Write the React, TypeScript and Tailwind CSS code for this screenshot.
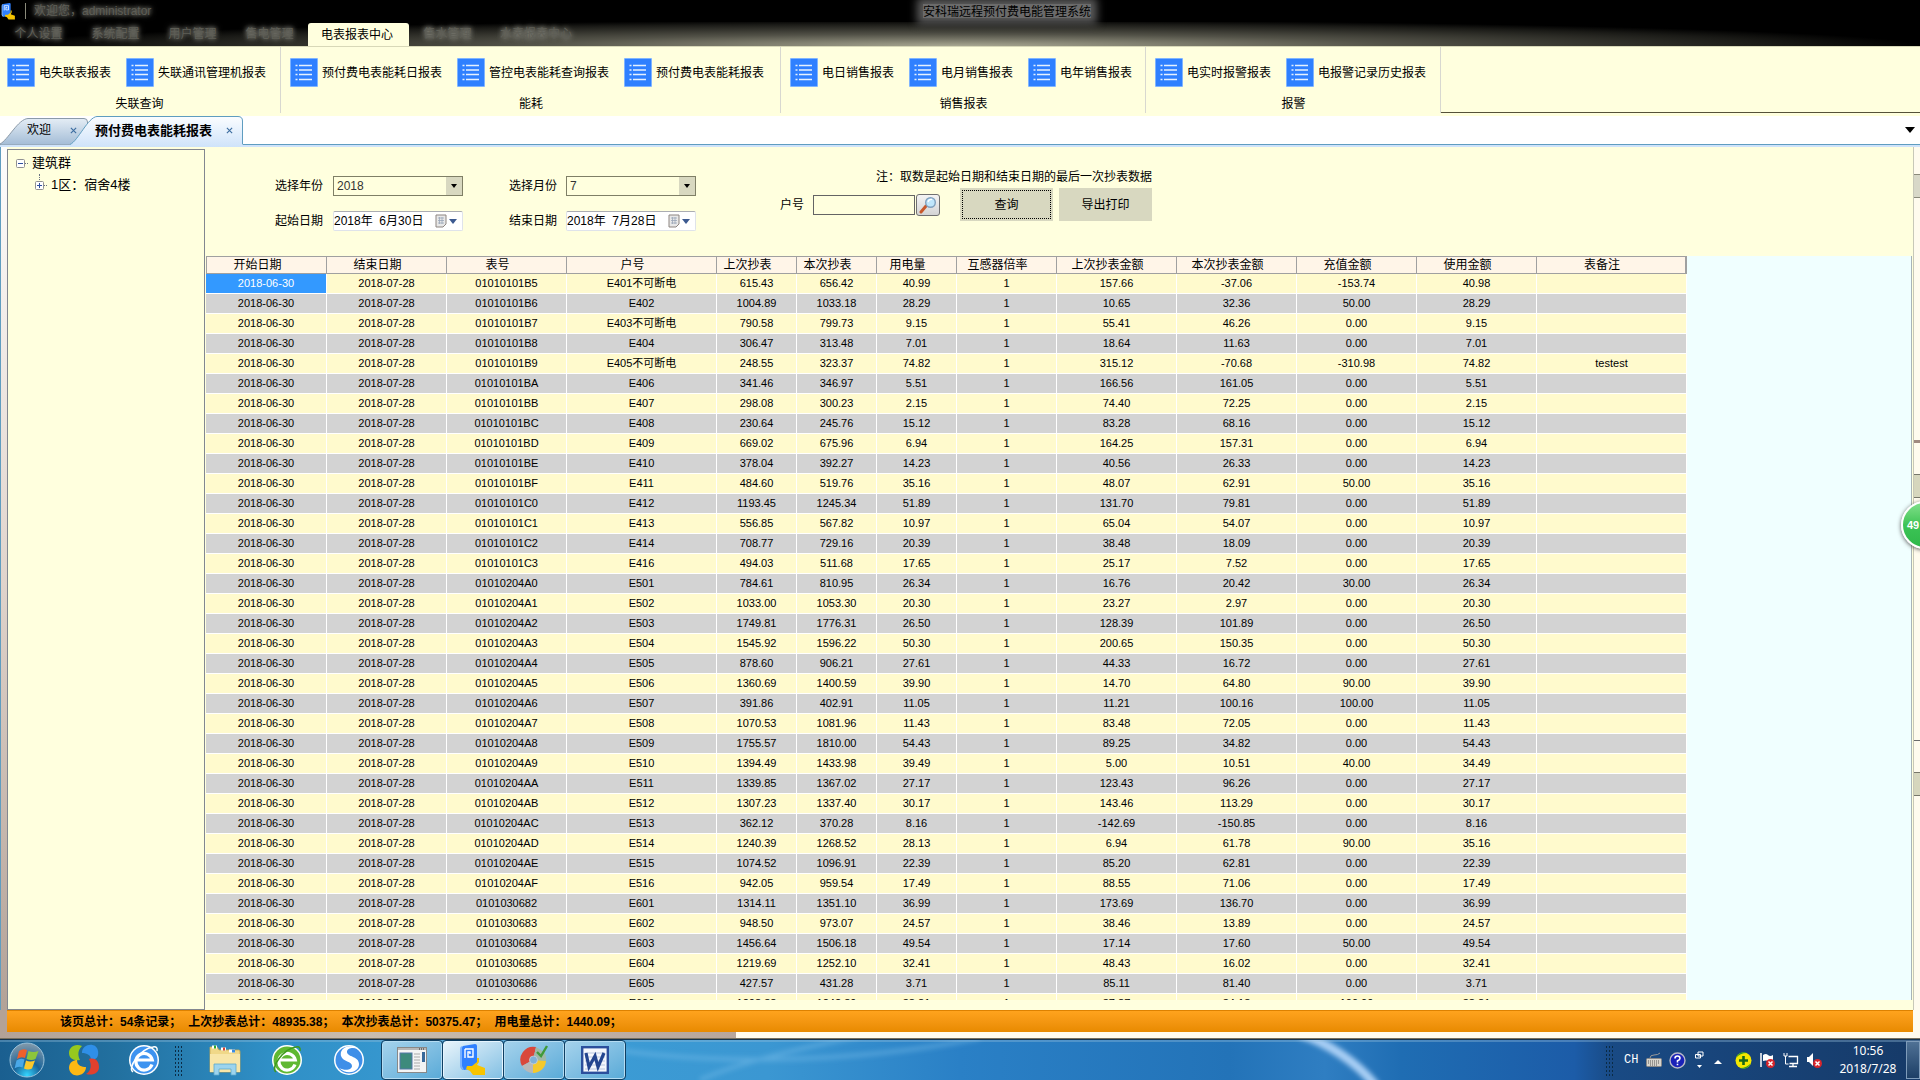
import React from "react";

const CJK = "font-['Liberation_Sans','Noto_Sans_CJK_SC',sans-serif]";

const RAW = `01010101B5|E401不可断电|615.43|656.42|40.99|157.66|-37.06|-153.74|40.98
01010101B6|E402|1004.89|1033.18|28.29|10.65|32.36|50.00|28.29
01010101B7|E403不可断电|790.58|799.73|9.15|55.41|46.26|0.00|9.15
01010101B8|E404|306.47|313.48|7.01|18.64|11.63|0.00|7.01
01010101B9|E405不可断电|248.55|323.37|74.82|315.12|-70.68|-310.98|74.82|testest
01010101BA|E406|341.46|346.97|5.51|166.56|161.05|0.00|5.51
01010101BB|E407|298.08|300.23|2.15|74.40|72.25|0.00|2.15
01010101BC|E408|230.64|245.76|15.12|83.28|68.16|0.00|15.12
01010101BD|E409|669.02|675.96|6.94|164.25|157.31|0.00|6.94
01010101BE|E410|378.04|392.27|14.23|40.56|26.33|0.00|14.23
01010101BF|E411|484.60|519.76|35.16|48.07|62.91|50.00|35.16
01010101C0|E412|1193.45|1245.34|51.89|131.70|79.81|0.00|51.89
01010101C1|E413|556.85|567.82|10.97|65.04|54.07|0.00|10.97
01010101C2|E414|708.77|729.16|20.39|38.48|18.09|0.00|20.39
01010101C3|E416|494.03|511.68|17.65|25.17|7.52|0.00|17.65
01010204A0|E501|784.61|810.95|26.34|16.76|20.42|30.00|26.34
01010204A1|E502|1033.00|1053.30|20.30|23.27|2.97|0.00|20.30
01010204A2|E503|1749.81|1776.31|26.50|128.39|101.89|0.00|26.50
01010204A3|E504|1545.92|1596.22|50.30|200.65|150.35|0.00|50.30
01010204A4|E505|878.60|906.21|27.61|44.33|16.72|0.00|27.61
01010204A5|E506|1360.69|1400.59|39.90|14.70|64.80|90.00|39.90
01010204A6|E507|391.86|402.91|11.05|11.21|100.16|100.00|11.05
01010204A7|E508|1070.53|1081.96|11.43|83.48|72.05|0.00|11.43
01010204A8|E509|1755.57|1810.00|54.43|89.25|34.82|0.00|54.43
01010204A9|E510|1394.49|1433.98|39.49|5.00|10.51|40.00|34.49
01010204AA|E511|1339.85|1367.02|27.17|123.43|96.26|0.00|27.17
01010204AB|E512|1307.23|1337.40|30.17|143.46|113.29|0.00|30.17
01010204AC|E513|362.12|370.28|8.16|-142.69|-150.85|0.00|8.16
01010204AD|E514|1240.39|1268.52|28.13|6.94|61.78|90.00|35.16
01010204AE|E515|1074.52|1096.91|22.39|85.20|62.81|0.00|22.39
01010204AF|E516|942.05|959.54|17.49|88.55|71.06|0.00|17.49
0101030682|E601|1314.11|1351.10|36.99|173.69|136.70|0.00|36.99
0101030683|E602|948.50|973.07|24.57|38.46|13.89|0.00|24.57
0101030684|E603|1456.64|1506.18|49.54|17.14|17.60|50.00|49.54
0101030685|E604|1219.69|1252.10|32.41|48.43|16.02|0.00|32.41
0101030686|E605|427.57|431.28|3.71|85.11|81.40|0.00|3.71
0101030687|E606|1208.88|1242.89|38.81|37.87|34.18|100.00|38.81`;

const ROWS = RAW.split("\n").map((line) => {
  const [meter, account, last, current, used, lastSum, currentSum, paid, spent, note = ""] = line.split("|");
  return ["2018-06-30", "2018-07-28", meter, account, last, current, used, "1", lastSum, currentSum, paid, spent, note];
});

const COLUMNS: [string, number][] = [
  ["开始日期", 121],
  ["结束日期", 120],
  ["表号", 120],
  ["户号", 150],
  ["上次抄表", 80],
  ["本次抄表", 80],
  ["用电量", 80],
  ["互感器倍率", 100],
  ["上次抄表金额", 120],
  ["本次抄表金额", 120],
  ["充值金额", 120],
  ["使用金额", 120],
  ["表备注", 150],
];

const GROUPS = [
  { name: "失联查询", width: "w-[281px] pl-[7px]", items: ["电失联表报表", "失联通讯管理机报表"] },
  { name: "能耗", width: "w-[500px] pl-[9px]", items: ["预付费电表能耗日报表", "管控电表能耗查询报表", "预付费电表能耗报表"] },
  { name: "销售报表", width: "w-[365px] pl-[9px]", items: ["电日销售报表", "电月销售报表", "电年销售报表"] },
  { name: "报警", width: "w-[295px] pl-[9px]", items: ["电实时报警报表", "电报警记录历史报表"] },
];

function AppLogo({ className }: { className: string }) {
  return (
    <svg viewBox="0 0 28 32" className={className} aria-hidden="true">
      <path d="M4 2 16 0q2 0 2 2v22L5 26q-3 0-3-3V4z" fill="#2f80ff" />
      <path d="M4 2Q1 2 1 5v17q0 3 4 4L3 22V4z" fill="#79b2ff" />
      <path d="M6 5v9M6 5h8v8H9V8h2v2" stroke="#fff" strokeWidth="1.400" fill="none" />
      <path d="M18 14h2v4l-2 3 8 3v7H14l-3-4-4-2 1-3h5l5-4z" fill="#f7c400" />
    </svg>
  );
}

function ListIcon() {
  return (
    <svg viewBox="0 0 28 29" className="h-[29px] w-7 shrink-0" aria-hidden="true">
      <rect width="28" height="29" rx="1" fill="#7fb4ff" />
      <rect x="1" y="1" width="26" height="27" fill="#2f80ff" />
      <path d="M9 7.500h13M9 12h13M9 16.500h13M9 21.500h13" stroke="#e6f1ff" strokeWidth="1.700" />
      <path d="M5.500 7.500h2M5.500 12h2M5.500 16.500h2M5.500 21.500h2" stroke="#e6f1ff" strokeWidth="1.700" />
    </svg>
  );
}

function TopBar() {
  const left = ["个人设置", "系统配置", "用户管理", "售电管理"];
  const faint = "text-[#5e5e56] [text-shadow:0_0_6px_#9a9a90,0_0_4px_#77776e]";
  return (
    <header className="shrink-0 bg-black">
      <div className="relative flex h-[22px] items-center">
        <AppLogo className="h-[17px] w-[17px]" />
        <span className="ml-2 h-4 w-px bg-[#8a8a7a]" />
        <span className={`ml-2 text-xs ${faint}`}>欢迎您，administrator</span>
        <h1 className="absolute left-1/2 w-[168px] -translate-x-[37px] bg-[#6b6b6b] text-xs leading-4 text-black shadow-[0_0_8px_6px_#5a5a5a]">
          <span className="block h-[14px] whitespace-nowrap">安科瑞远程预付费电能管理系统</span>
        </h1>
      </div>
      <nav className="flex h-6 items-end bg-[radial-gradient(ellipse_960px_26px_at_50%_100%,#a8a792_0%,#8a897899_45%,#33332c80_85%,transparent_100%)] text-xs">
        {left.map((t) => (
          <button key={t} type="button" className={`h-6 w-[77px] ${faint}`}>{t}</button>
        ))}
        <button type="button" className="h-[23px] w-[101px] rounded-t-[3px] bg-[#ffffde] pr-[3px] text-black">电表报表中心</button>
        <button type="button" className={`h-6 w-[77px] ${faint}`}>售水管理</button>
        <button type="button" className={`h-6 w-[100px] ${faint}`}>水表报表中心</button>
      </nav>
    </header>
  );
}

function Ribbon() {
  return (
    <div className="flex h-[70px] shrink-0 border-t border-[#d8d8b8] bg-[#ffffde] text-xs text-black">
      {GROUPS.map((g) => (
        <section key={g.name} className={`flex h-[66px] shrink-0 flex-col border-r border-[#d8d8d0] ${g.width}`}>
          <div className="flex gap-[15px] pt-[11px]">
            {g.items.map((t) => (
              <button key={t} type="button" className="flex items-center gap-1 whitespace-nowrap leading-4">
                <ListIcon />
                {t}
              </button>
            ))}
          </div>
          <div className="mt-[9px] pr-2 text-center leading-4">{g.name}</div>
        </section>
      ))}
      <div className="h-[66px] grow border-b border-[#55513a]" />
    </div>
  );
}

function TabStrip() {
  return (
    <div className="flex h-[31px] shrink-0 items-stretch border-b-2 border-[#cfe3fa] bg-white text-xs text-black">
      <div className="relative flex w-[72px] items-center border-b border-[#5f9dc0] pl-[27px]">
        <svg viewBox="0 0 90 27" className="absolute left-0 top-0.5 h-[27px] w-[90px]" aria-hidden="true">
          <defs>
            <linearGradient id="idleTab" x1="0" y1="0" x2="0" y2="1">
              <stop offset="0" stopColor="#e4edf5" />
              <stop offset="1" stopColor="#a3bcd6" />
            </linearGradient>
          </defs>
          <path d="M0 26C8 22 18 1 28 .5H84Q87.500 .5 87.500 4V27H0z" fill="url(#idleTab)" stroke="#8b9aa8" />
        </svg>
        <button type="button" className="relative">欢迎</button>
        <button type="button" aria-label="关闭欢迎" className="absolute left-[70px] z-10 text-[#3d6da0]">
          <svg viewBox="0 0 8 8" className="size-[7px] stroke-current"><path d="M1 1l6 6M7 1 1 7" strokeWidth="1.300" /></svg>
        </button>
      </div>
      <div className="relative flex w-[171px] items-center justify-between pl-[23px] pr-[10px]">
        <svg viewBox="0 0 174 31" className="absolute -left-[2px] top-0 h-[31px] w-[174px]" aria-hidden="true">
          <defs>
            <linearGradient id="openTab" x1="0" y1="0" x2="0" y2="1">
              <stop offset="0" stopColor="#fbfdff" />
              <stop offset="1" stopColor="#cfe3fa" />
            </linearGradient>
          </defs>
          <path d="M0 31V28.500C8 25 18 1 27 .5H168Q172.500 .5 172.500 5V31z" fill="url(#openTab)" />
          <path d="M0 28.500C8 25 18 1 27 .5H168Q172.500 .5 172.500 5V28.500" fill="none" stroke="#5f9dc0" />
        </svg>
        <button type="button" className="relative whitespace-nowrap text-[13px] font-bold">预付费电表能耗报表</button>
        <button type="button" aria-label="关闭报表" className="relative text-[#3d6da0]">
          <svg viewBox="0 0 8 8" className="size-[7px] stroke-current"><path d="M1 1l6 6M7 1 1 7" strokeWidth="1.300" /></svg>
        </button>
      </div>
      <div className="flex grow items-center justify-end border-b border-[#5f9dc0] pr-[5px]">
        <button type="button" aria-label="标签列表">
          <svg viewBox="0 0 10 6" className="h-[6px] w-[10px]"><path d="M0 0h10L5 6z" /></svg>
        </button>
      </div>
    </div>
  );
}

function TreeBox({ open }: { open: boolean }) {
  return (
    <svg viewBox="0 0 9 9" className="size-[9px]" aria-hidden="true">
      <rect x=".5" y=".5" width="8" height="8" rx="1" fill="#fff" stroke="#919191" />
      <path d={open ? "M2 4.500h5" : "M2 4.500h5M4.500 2v5"} stroke="#2f4f9f" />
    </svg>
  );
}

function Tree() {
  return (
    <aside className="w-[198px] shrink-0 border border-[#828790] bg-[#ffffde] text-[13px] text-black">
      <ul className="pl-2 pt-0.5">
        <li>
          <button type="button" className="flex h-[22px] items-center">
            <TreeBox open />
            <span className="w-[3px] border-t border-dotted border-gray-500" />
            <span className="pl-1">建筑群</span>
          </button>
          <ul className="pl-[19px]">
            <li>
              <button type="button" className="relative flex h-[22px] items-center">
                <span className="absolute left-1 top-0 h-[6px] border-l border-dotted border-gray-500" />
                <TreeBox open={false} />
                <span className="w-[3px] border-t border-dotted border-gray-500" />
                <span className="pl-1">1区：宿舍4楼</span>
              </button>
            </li>
          </ul>
        </li>
      </ul>
    </aside>
  );
}

function Picker({ id, value }: { id: string; value: string }) {
  return (
    <div className="relative h-5">
      <select id={id} defaultValue={value} className="h-5 w-full appearance-none border border-[#7f7f66] bg-[#ffffde] px-[3px] text-xs leading-4 text-[#333]">
        <option>{value}</option>
      </select>
      <span className="pointer-events-none absolute right-px top-px flex h-[18px] w-4 items-center justify-center bg-[#d8d8c0]">
        <svg viewBox="0 0 6 4" className="h-1 w-1.5"><path d="M0 0h6L3 4z" /></svg>
      </span>
    </div>
  );
}

function DateBox({ id, value }: { id: string; value: string }) {
  return (
    <div className="flex h-5 items-center rounded-[2px] border border-[#dfe3ea] border-t-[#abadb3] bg-white">
      <input id={id} defaultValue={value} className="w-[101px] text-xs leading-4 text-black outline-none" />
      <button type="button" aria-label="选择日期" className="flex items-center gap-0.5">
        <svg viewBox="0 0 12 14" className="h-[14px] w-3">
          <path d="M1 1h10v9l-3 3H1z" fill="#e8e8e8" stroke="#8d8580" />
          <path d="M3 4h6M3 6.500h6M3 9h6M4.500 3v7M7 3v7" stroke="#9aa6b8" strokeWidth=".8" />
        </svg>
        <svg viewBox="0 0 8 5" className="h-[5px] w-2"><path d="M0 0h8L4 5z" fill="#3c5a90" /></svg>
      </button>
    </div>
  );
}

function Filters() {
  return (
    <form className="flex h-[109px] shrink-0 text-xs text-black" onSubmit={(e) => e.preventDefault()}>
      <div className="grid h-fit grid-cols-[58px_130px_103px_130px] items-center gap-y-[15px] pl-[69px] pt-[29px]">
        <label htmlFor="year">选择年份</label>
        <Picker id="year" value="2018" />
        <label htmlFor="month" className="pl-[46px]">选择月份</label>
        <Picker id="month" value="7" />
        <label htmlFor="from">起始日期</label>
        <DateBox id="from" value="2018年  6月30日" />
        <label htmlFor="to" className="pl-[46px]">结束日期</label>
        <DateBox id="to" value="2018年  7月28日" />
      </div>
      <div className="ml-[84px] flex flex-col items-end pt-[21px]">
        <p className="h-5 whitespace-nowrap leading-[18px]">注：取数是起始日期和结束日期的最后一次抄表数据</p>
        <div className="flex items-center">
          <label htmlFor="account" className="mr-[9px]">户号</label>
          <input id="account" className="h-5 w-[102px] border border-[#646464] bg-[#ffffde] px-1 outline-none" />
          <button type="button" aria-label="搜索" className="ml-px flex h-[22px] w-6 items-center justify-center rounded-[3px] border border-[#707070] bg-linear-to-b from-[#f4f4f4] to-[#d4d4d4]">
            <svg viewBox="0 0 18 18" className="size-[18px]">
              <path d="M2 16l5-6" stroke="#c8592b" strokeWidth="3" strokeLinecap="round" />
              <circle cx="11.500" cy="6.500" r="4.800" fill="#bfe6fb" stroke="#7fa0bd" strokeWidth="1.400" />
              <path d="M9 6q1-3 4-2.500" stroke="#fff" fill="none" strokeWidth="1.300" />
            </svg>
          </button>
          <button type="submit" className="ml-5 h-[33px] w-[93px] bg-[#d8d8c0] p-0.5">
            <span className="flex h-full items-center justify-center border border-dotted border-black">查询</span>
          </button>
          <button type="button" className="ml-1.5 h-[33px] w-[93px] bg-[#d8d8c0]">导出打印</button>
        </div>
      </div>
    </form>
  );
}

function Grid() {
  return (
    <div className="min-h-0 grow overflow-hidden border-r border-[#a9b4b8] bg-[#f0ffff]">
      <table className="w-[1481px] table-fixed border-separate border-spacing-0 text-center text-black">
        <colgroup>
          {COLUMNS.map(([name, width]) => (
            <col key={name} style={{ width }} />
          ))}
        </colgroup>
        <thead>
          <tr className="h-[18px]">
            {COLUMNS.map(([name]) => (
              <th key={name} className="border-y border-[#a0a0a0] bg-[#fff5e8] p-0 text-xs font-normal leading-4 first:border-l last:border-r">
                <div className="h-4 border-r border-[#a0a0a0] pr-[18px] whitespace-nowrap">{name}</div>
              </th>
            ))}
          </tr>
        </thead>
        <tbody className="text-[11px] leading-[19px]">
          {ROWS.map((row, i) => (
            <tr key={row[2]} className="h-5 odd:bg-[#fffacd] even:bg-[#d3d3d3]">
              {row.map((cell, j) => (
                <td
                  key={j}
                  className={
                    i === 0 && j === 0
                      ? "h-5 border-b border-r border-white bg-[#3399ff] p-0 text-white"
                      : "h-5 whitespace-nowrap border-b border-r border-white p-0"
                  }
                >
                  {cell}
                </td>
              ))}
            </tr>
          ))}
        </tbody>
      </table>
    </div>
  );
}

function EdgeStrip() {
  return (
    <div className="w-[7px] shrink-0 border-l border-[#c8c8b8] bg-[#fffbee]">
      <div className="mt-[27px] h-6 border-y border-[#8a8a7a] bg-[#d8d8c8]" />
      <div className="mt-[242px] h-[3px] bg-[#a08a80]" />
      <div className="mt-[31px] h-6 border-y border-[#77776a] bg-[#d6d6bd]" />
      <div className="mt-[242px] h-px bg-[#6a6a6a]" />
      <div className="mt-[31px] h-6 border-y border-[#77776a] bg-[#d6d6bd]" />
    </div>
  );
}

function Totals() {
  return (
    <div className="flex shrink-0 items-stretch">
      <div className="w-[7px] bg-[#b3a297]" />
      <div className="flex h-[22px] grow items-center gap-[7px] border-t border-[#dd8100] bg-linear-to-b from-[#ffa31d] to-[#e88a00] pl-[53px] text-xs font-bold text-black">
        <span>该页总计：54条记录；</span>
        <span>上次抄表总计：48935.38；</span>
        <span>本次抄表总计：50375.47；</span>
        <span>用电量总计：1440.09；</span>
      </div>
      <div className="w-[7px] bg-[#fffbee]" />
    </div>
  );
}

function BrowserE({ color, ring }: { color: string; ring: string }) {
  return (
    <svg viewBox="0 0 32 32" className="size-8" aria-hidden="true">
      <circle cx="16" cy="16" r="15" fill="#fff" />
      <circle cx="16" cy="16" r="13.500" fill={color} />
      <path d="M24 20.500a8.300 8.300 0 1 1 .3-4.500H9" fill="none" stroke="#fff" strokeWidth="3.200" />
      <path d="M5 28C-1 24 12 5 25 3q5-1 4 4" fill="none" stroke={ring} strokeWidth="1.500" />
    </svg>
  );
}

function Dots() {
  return <span className="h-[31px] w-[9px] bg-[radial-gradient(#0b2b45_45%,transparent_50%)] bg-[length:3px_4px]" />;
}

function TaskButton({ label, active, children }: { label: string; active?: boolean; children: React.ReactNode }) {
  return (
    <button
      type="button"
      aria-label={label}
      className={
        active
          ? "flex h-[38px] w-[60px] items-center justify-center rounded-[3px] border border-[#e6f5ff] bg-linear-to-br from-[#e8f4fb] to-[#82c0e3] outline outline-[#0f3f63]"
          : "flex h-[38px] w-[60px] items-center justify-center rounded-[3px] border border-[#b5dcf2] bg-linear-to-br from-[#a4d2ec] to-[#5aabd8] outline outline-[#0f3f63]"
      }
    >
      {children}
    </button>
  );
}

function RedCross() {
  return (
    <>
      <circle cx="11.500" cy="11.500" r="4.500" fill="#d8262c" />
      <path d="M9.500 9.500l4 4M13.500 9.500l-4 4" stroke="#fff" strokeWidth="1.500" />
    </>
  );
}

function Taskbar() {
  const slot = "flex h-10 w-[60px] items-center justify-center";
  const wideSlot = "flex h-10 w-[62px] items-center justify-center";
  return (
    <footer className="relative flex h-[41px] shrink-0 items-center overflow-hidden border-t border-[#16324c] bg-[linear-gradient(90deg,#1a5f90_0%,#22709f_6%,#2f8fc6_14%,#3c9ed6_26%,#3b97d2_40%,#2a80c6_50%,#2373b8_64%,#2f7ec2_69%,#1f6db3_73%,#1c5ca8_82%,#194a84_84%,#163a68_100%)]">
      <svg viewBox="0 0 1920 40" preserveAspectRatio="none" className="absolute inset-0 h-full w-full" aria-hidden="true">
        <defs>
          <filter id="soft" x="-20%" y="-50%" width="140%" height="200%"><feGaussianBlur stdDeviation="2.500" /></filter>
        </defs>
        <path d="M1300-6C1325 2 1355 20 1376 46" stroke="#a9cff5" strokeWidth="9" fill="none" filter="url(#soft)" />
        <path d="M700 40C740 22 800 8 860-4M560 0C700 30 860 22 980-2" stroke="#7fc0ea" strokeOpacity=".45" strokeWidth="4" fill="none" filter="url(#soft)" />
        <path d="M0 1h1920" stroke="#9cc3de" strokeOpacity=".7" />
      </svg>
      <button type="button" aria-label="开始" className="relative flex h-10 w-[54px] items-center justify-center">
        <svg viewBox="0 0 36 36" className="size-9">
          <defs>
            <radialGradient id="orb" cx=".5" cy=".95" r=".9">
              <stop offset="0" stopColor="#35d6ff" /><stop offset=".45" stopColor="#17639a" /><stop offset="1" stopColor="#7c95a8" />
            </radialGradient>
          </defs>
          <circle cx="18" cy="18" r="17" fill="url(#orb)" stroke="#9cc4dc" />
          <path d="M10 9q4-3 8-1l-2 8q-4-2-8 1z" fill="#f0602a" />
          <path d="M19.500 9q5 2 10 0l-3 8q-4 2-9 0z" fill="#8cc63c" />
          <path d="M7.500 18.500q4-3 8-1l-2 8q-4-2-8 1z" fill="#4aa8e8" />
          <path d="M17 18.500q4 2 9 0l-3 8q-4 2-8 0z" fill="#fcc82c" />
        </svg>
      </button>
      <button type="button" aria-label="软件管家" className={`relative ${slot}`}>
        <svg viewBox="0 0 32 32" className="size-8">
          <path d="M14 2C6-1 1 4 1 9s4 8 11 7c-2-4-3-9 2-14z" fill="#96c81e" />
          <path d="M14 9c0-10 15-11 16-2 1 6-2 9-7 9 0-5-4-7-9-7z" fill="#2f8fe8" />
          <path d="M1 24c0-6 5-8 8-8 0 6 5 7 9 7 0 10-16 12-17 1z" fill="#fdb813" />
          <path d="M21 15c7-2 10 3 10 8 0 6-6 9-13 7 5-3 6-9 3-15z" fill="#e0402e" />
        </svg>
      </button>
      <button type="button" aria-label="浏览器" className={`relative ${slot}`}><BrowserE color="#3d93f0" ring="#ffffff" /></button>
      <Dots />
      <button type="button" aria-label="资源管理器" className={`relative ml-[11px] ${wideSlot}`}>
        <svg viewBox="0 0 32 32" className="size-8">
          <path d="M1 3h7l2 3h20q1 0 1 2v20H1z" fill="#f0d888" stroke="#c8a850" strokeWidth=".8" />
          <path d="M3 3h5M12 5h5M20 7h6" stroke="#fff" strokeWidth="3" />
          <path d="M5 3h2" stroke="#2ba82b" strokeWidth="3" /><path d="M14 5h2" stroke="#d8402c" strokeWidth="3" /><path d="M23 7h3" stroke="#3c8ce0" strokeWidth="3" />
          <path d="M1 10h30v18H1z" fill="#f8e6a8" />
          <path d="M5 31V20h22v11h-5v-6H10v6z" fill="#9cd4ee" stroke="#5ba8cc" strokeWidth=".8" />
        </svg>
      </button>
      <button type="button" aria-label="安全浏览器" className={`relative ${wideSlot}`}><BrowserE color="#5fb832" ring="#3f9a1e" /></button>
      <button type="button" aria-label="搜狗浏览器" className={`relative ${wideSlot}`}>
        <svg viewBox="0 0 32 32" className="size-8">
          <circle cx="16" cy="16" r="15" fill="#fff" />
          <circle cx="16" cy="16" r="13.500" fill="#3f8fe8" />
          <path d="M25 5C17-1 6 4 8 12c2 6 11 5 11 10 0 4-7 5-13 2 7 7 20 5 20-4 0-8-12-7-12-12 0-4 6-5 11-3z" fill="#fff" />
        </svg>
      </button>
      <div className="relative ml-0.5 flex gap-px">
        <TaskButton label="窗口">
          <svg viewBox="0 0 30 26" className="h-[26px] w-[30px]">
            <rect x=".5" y=".5" width="29" height="25" fill="#f4f4f4" stroke="#888" />
            <path d="M1 2h28" stroke="#b8b8b8" strokeWidth="2" /><path d="M22 2h6" stroke="#555" strokeWidth="1.500" strokeDasharray="1 1" />
            <rect x="3" y="6" width="12" height="16" fill="#3d8a7c" stroke="#5577a8" />
            <path d="M17 7h6M17 10h6M17 13h6M17 16h6M17 19h6M17 22h6" stroke="#aaa" />
            <rect x="25" y="5" width="3" height="10" fill="#37689a" />
          </svg>
        </TaskButton>
        <TaskButton label="预付费系统" active><AppLogo className="h-8 w-7" /></TaskButton>
        <TaskButton label="控制台">
          <svg viewBox="0 0 30 30" className="size-[30px]">
            <path d="M14 15 3 21A13 13 0 0 1 17 2z" fill="#d9483b" />
            <path d="M14 15 17 2l8 5a13 13 0 0 1 2 9z" fill="#9fb8a8" />
            <path d="M14 15l13 1a13 13 0 0 1-13 12z" fill="#f5c92c" />
            <path d="M14 15v13A13 13 0 0 1 3 21z" fill="#b8b8b8" />
            <circle cx="14.500" cy="15" r="4" fill="#7fb0d8" stroke="#c8d0d8" strokeWidth=".8" />
            <path d="M18 7l4 4 6-10" stroke="#3f9a3a" strokeWidth="2.400" fill="none" />
          </svg>
        </TaskButton>
        <TaskButton label="Word">
          <svg viewBox="0 0 28 28" className="size-7">
            <rect x="1.200" y="1.200" width="25.600" height="25.600" fill="#f4f7fc" stroke="#2b4f9c" strokeWidth="2.400" />
            <path d="M4 7h20M4 11h20M4 15h20M4 19h20M4 23h20" stroke="#b8c6e0" />
            <path d="M5 7l3 14 6-11 3 11 6-14" fill="none" stroke="#23458f" strokeWidth="3.200" />
          </svg>
        </TaskButton>
      </div>

      <div className="relative ml-auto flex h-10 items-center text-white">
        <Dots />
        <span className="ml-2.5 w-[14px] font-['Liberation_Mono',monospace] text-xs leading-4">CH</span>
        <svg viewBox="0 0 16 16" className="ml-2 size-4" aria-hidden="true">
          <path d="M4 6q0-3 4-3t6-2" fill="none" stroke="#999" />
          <rect x=".5" y="6.500" width="15" height="8" rx="1" fill="#d8d4cc" stroke="#888" />
          <path d="M2 9h12M2 11h12M4 13h8" stroke="#555" strokeDasharray="1 1" />
        </svg>
        <svg viewBox="0 0 17 17" className="ml-[7px] size-[17px]" aria-hidden="true">
          <circle cx="8.500" cy="8.500" r="7.500" fill="#1a22b8" stroke="#b8b8c8" strokeWidth="1.400" />
          <path d="M6 6.500q0-2.500 2.500-2.500T11 6.300Q11 8 8.500 8.800V10.500M8.500 11.700v1.600" stroke="#fff" strokeWidth="1.600" fill="none" />
        </svg>
        <svg viewBox="0 0 9 18" className="ml-[9px] h-[18px] w-[9px]" aria-hidden="true">
          <path d="M3 1h5v4H3zM.5 3.500h5v3.500h-5z" fill="none" stroke="#fff" />
          <path d="M2 14h5l-2.500 3z" fill="#fff" />
        </svg>
        <svg viewBox="0 0 8 4" className="ml-2.5 mt-1 h-1 w-2" aria-hidden="true"><path d="M0 4h8L4 0z" fill="#fff" /></svg>
        <svg viewBox="0 0 17 17" className="ml-[13px] size-[17px]" aria-hidden="true">
          <circle cx="8.500" cy="8.500" r="8" fill="#f4e800" />
          <path d="M1 6A8 8 0 0 1 12 1q-7 0-11 5zM16 11A8 8 0 0 1 5 16q7 0 11-5z" fill="#2f9c28" />
          <path d="M8.500 4v9M4 8.500h9" stroke="#186818" strokeWidth="2.600" />
        </svg>
        <svg viewBox="0 0 16 16" className="ml-[7px] size-4" aria-hidden="true">
          <path d="M2 1v14" stroke="#fff" strokeWidth="1.500" /><path d="M4 3q3-2 5 0t5 0v6q-3 1-5 0T4 9z" fill="#fff" /><RedCross />
        </svg>
        <svg viewBox="0 0 16 16" className="ml-2 size-4" aria-hidden="true">
          <path d="M5.500 4.500h9v7h-8M10 12v2M6 14.500h8" fill="none" stroke="#fff" strokeWidth="1.300" />
          <path d="M1 1v3h3V1M2.500 4v8h3" fill="none" stroke="#fff" />
        </svg>
        <svg viewBox="0 0 16 16" className="ml-[7px] size-4" aria-hidden="true">
          <path d="M1 5h2l4-4v13l-4-4H1z" fill="#fff" /><RedCross />
        </svg>
        <time className="ml-2 w-[76px] text-center font-['Noto_Sans',sans-serif] text-xs leading-[18px]">
          10:56<br />2018/7/28
        </time>
        <button type="button" aria-label="显示桌面" className="h-[38px] w-[14px] border border-[#7f9cba] bg-linear-to-b from-[#4f7195] to-[#1d3f66]" />
      </div>
    </footer>
  );
}

export default function App() {
  return (
    <div className={`relative flex h-screen flex-col overflow-hidden bg-[#ffffde] ${CJK}`}>
      <TopBar />
      <Ribbon />
      <TabStrip />
      <main className="flex min-h-0 flex-1">
        <div className="w-[7px] shrink-0 border-l border-[#5f9dc0] bg-linear-to-b from-[#fdfdfd] via-[#e0d4cc] to-[#b3a297]" />
        <div className="flex min-w-0 grow">
          <div className="flex pt-0.5"><Tree /></div>
          <div className="flex min-w-0 grow flex-col pb-[10px] pl-px pr-px">
            <Filters />
            <Grid />
          </div>
        </div>
        <EdgeStrip />
      </main>
      <Totals />
      <div className="flex h-[7px] shrink-0 border-b border-[#77705f]">
        <div className="w-[736px] bg-linear-to-r from-[#b3a297] via-[#c9bcae] to-[#b8a69c]" />
        <div className="grow bg-[#fffbee]" />
      </div>
      <Taskbar />
      <div className="absolute -right-[29px] top-[501px] flex size-12 items-center rounded-full border-2 border-white bg-linear-to-b from-[#7fe08a] via-[#3cc455] to-[#2fb84a] pl-1 text-[11px] font-bold text-white shadow-[0_1px_4px_#555]">49</div>
    </div>
  );
}
